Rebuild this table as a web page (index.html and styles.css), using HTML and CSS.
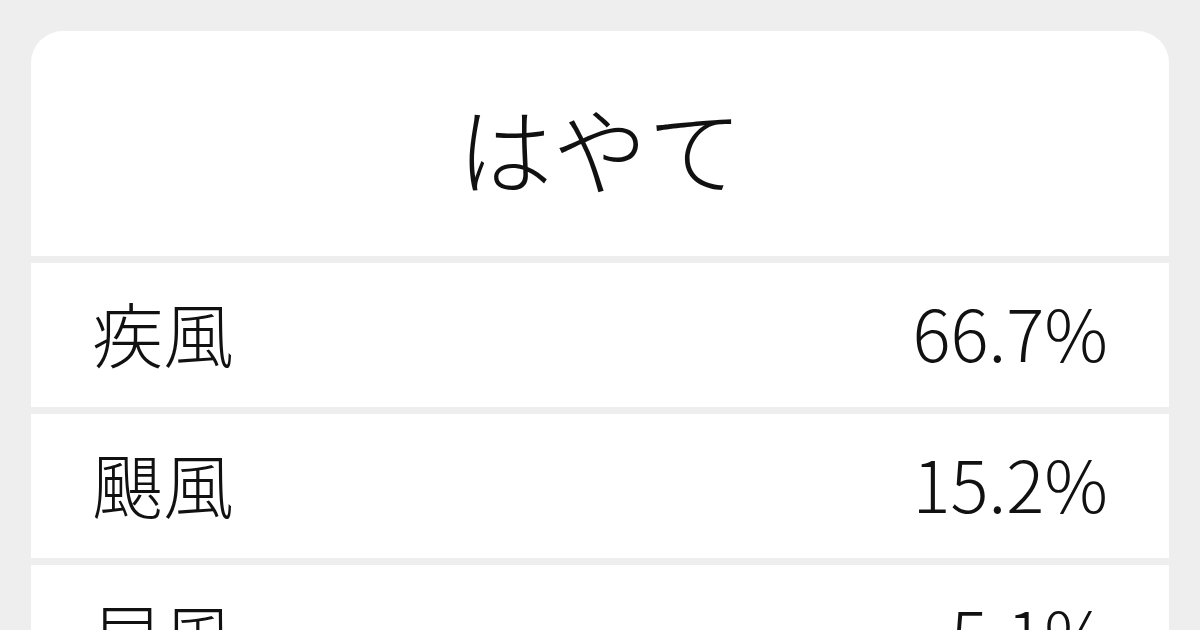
FILE: index.html
```html
<!DOCTYPE html>
<html lang="ja">
<head>
<meta charset="UTF-8" />
<meta name="viewport" content="width=device-width, initial-scale=1" />
<title>はやて</title>
<link rel="stylesheet" href="styles.css">
</head>
<body>
<div class="card">
  <h1 class="title">はやて</h1>
  <div class="row">
    <span class="word">疾風</span>
    <span class="rate">66.7%</span>
  </div>
  <div class="row">
    <span class="word">颶風</span>
    <span class="rate">15.2%</span>
  </div>
  <div class="row">
    <span class="word">早風</span>
    <span class="rate">5.1%</span>
  </div>
</div>
</body>
</html>
```

FILE: styles.css
```css
body {
  margin: 0;
  padding: 31px;
  background: #eeeeee;
  font-family: "Noto Sans CJK JP", "Noto Sans", sans-serif;
  color: #111;
  height: 630px;
  box-sizing: border-box;
  overflow: hidden;
}
.card {
  display: flex;
  flex-direction: column;
  gap: 7px;
}
.title {
  margin: 0;
  height: 225px;
  background: white;
  border-radius: 32px 32px 0 0;
  display: flex;
  justify-content: center;
  align-items: center;
  padding-top: 6px;
  box-sizing: border-box;
  font-size: 95px;
  font-weight: 300;
  flex-shrink: 0;
}
.row {
  height: 144px;
  background: white;
  display: flex;
  justify-content: space-between;
  align-items: center;
  padding: 0 61px 8px 61px;
  box-sizing: border-box;
  font-size: 71px;
  font-weight: 300;
  flex-shrink: 0;
}
```
